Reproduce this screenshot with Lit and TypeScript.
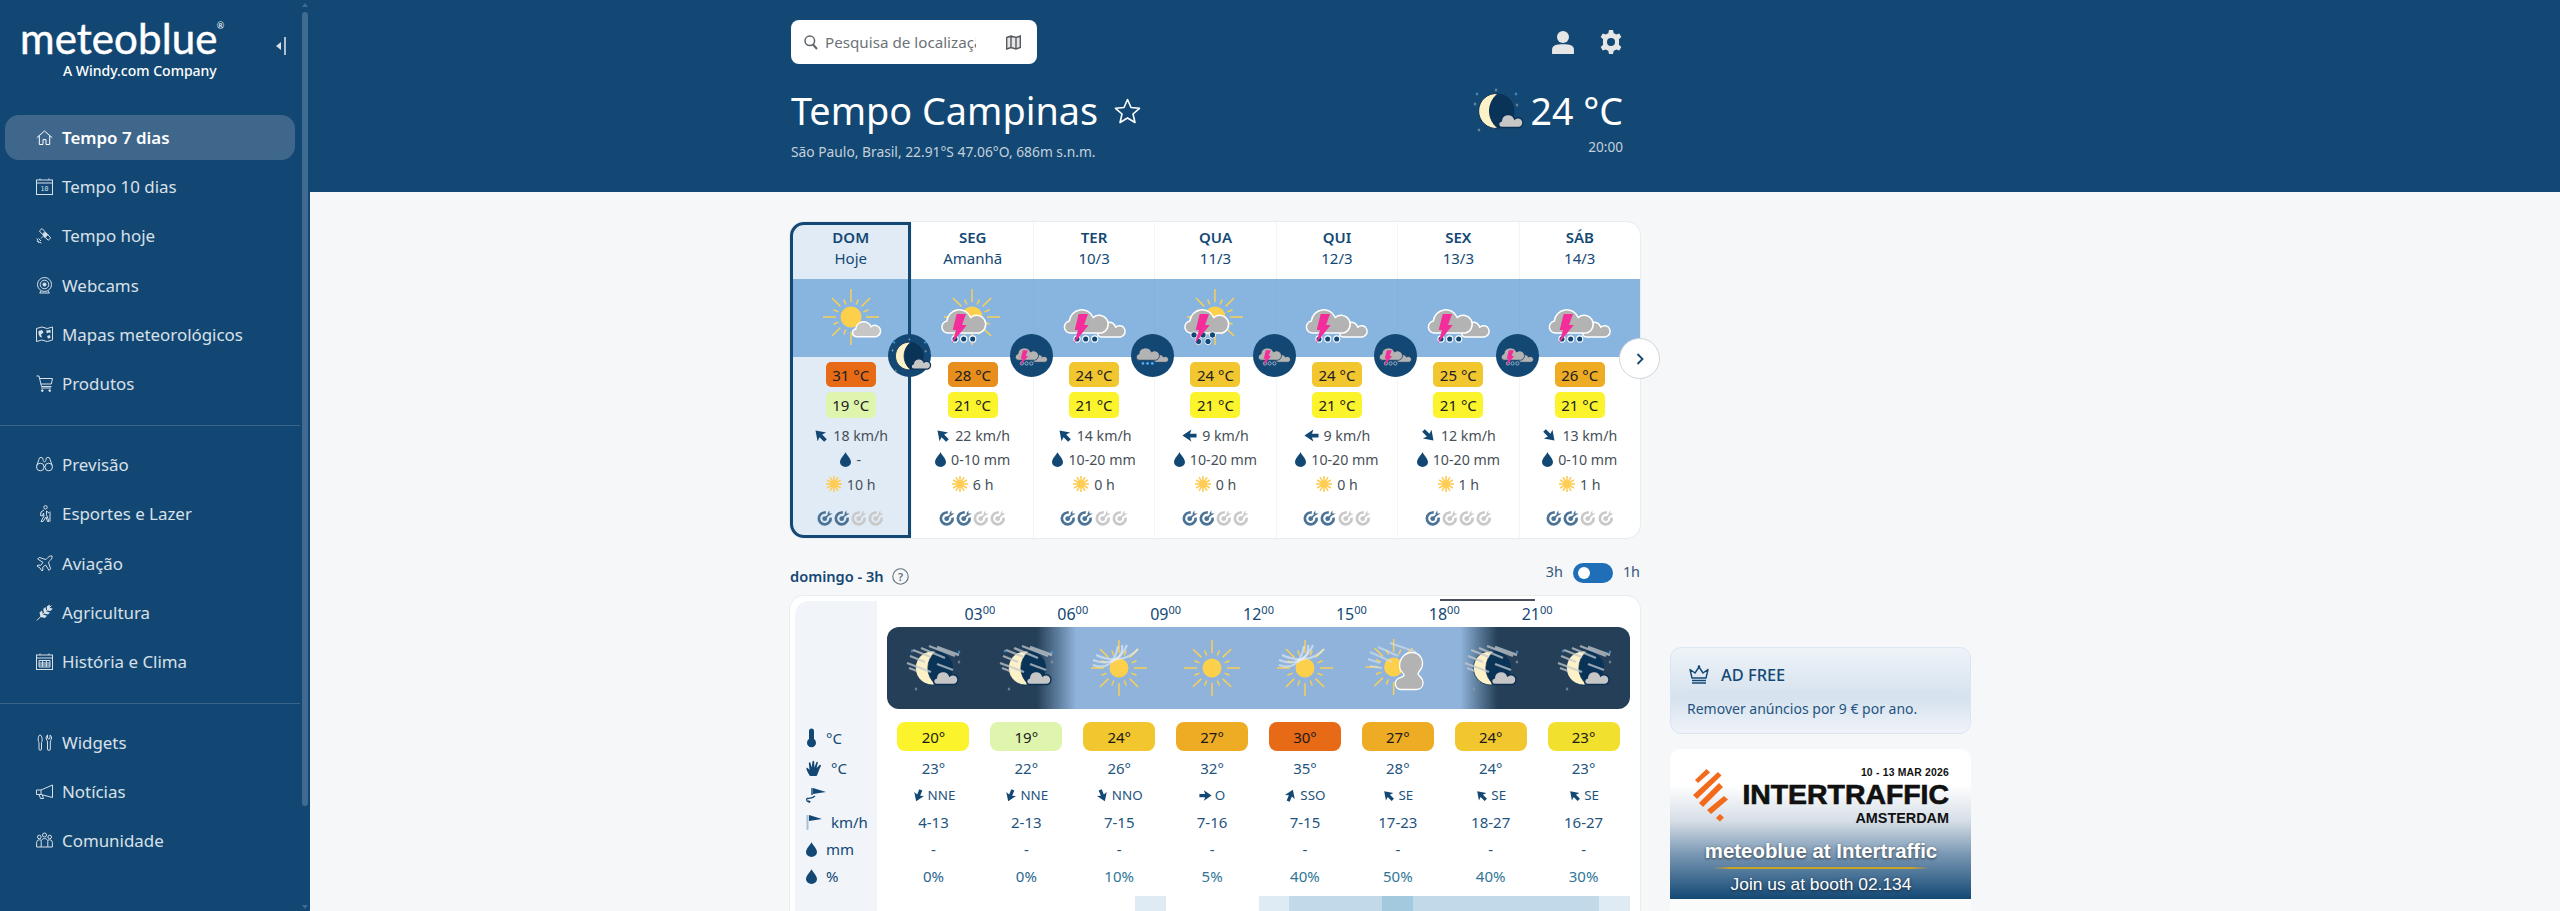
// app.ts
import { LitElement, html, css, svg } from "lit";
import { customElement } from "lit/decorators.js";

const NAVY = "#134874";

// ---------- weather pieces, drawn on a 64x64 box ----------
const CLOUD = "M7 26a6 6 0 0 1-1.2-11.9A12.5 12.5 0 0 1 29.8 10.5A9 9 0 1 1 38 26Z";

const cloud = (x: number, y: number, s: number, fill = "#b3b3b3", edge = "#fff") => svg`
  <path transform="translate(${x} ${y}) scale(${s})" d=${CLOUD} fill=${fill} stroke=${edge} stroke-width=${1.5 / s}></path>`;

const sun = (r = 10.5, color = "#f9cf55") => {
  const rays = [];
  for (let i = 0; i < 16; i++) {
    const a = (i * Math.PI) / 8;
    const long = i % 2 === 0;
    const r1 = long ? 15 : 13.5;
    const r2 = long ? (i % 4 === 0 ? 28 : 27) : 19;
    rays.push(svg`<line x1=${32 + Math.cos(a) * r1} y1=${32 + Math.sin(a) * r1} x2=${32 + Math.cos(a) * r2} y2=${32 + Math.sin(a) * r2} stroke=${color} stroke-width="1.5"></line>`);
  }
  return svg`${rays}<circle cx="32" cy="32" r=${r} fill="#fdd04c"></circle>`;
};

const bolt = svg`<path d="M16.7 29H26L22 40H26.7L12 58.3L16 45H12.7Z" fill="#f52d9b"></path>`;

const dots = (fill: string, edge: string) => svg`
  ${[15, 23.7, 32.7].map((x) => svg`<circle cx=${x} cy="54" r="3.1" fill=${fill} stroke=${edge} stroke-width="1.1"></circle>`)}`;

const bigDrops = svg`
  ${[[11, 50], [20, 50], [29.5, 50], [15.5, 56.5], [25, 56.5]].map(([x, y]) => svg`<circle cx=${x} cy=${y} r="3.2" fill=${NAVY} stroke="#fff" stroke-width=".9"></circle>`)}`;

const dayIcons: Record<string, unknown> = {
  sun: svg`${sun()}${cloud(33, 35, 0.64, "#c6c6c6")}`,
  stormSun: svg`${sun()}${cloud(1, 22, 1)}${dots(NAVY, "#fff")}${bolt}`,
  stormSunHeavy: svg`${sun()}${cloud(1, 22, 1)}${bigDrops}${bolt}`,
  storm: svg`${cloud(35, 35.5, 0.63)}${cloud(1.5, 22, 1)}${dots(NAVY, "#fff")}${bolt}`,
  stormLight: svg`${cloud(35, 35.5, 0.63, "#b3b3b3", "#123f68")}${cloud(1.5, 22, 1, "#b3b3b3", "#123f68")}${dots(NAVY, "#e6edf3")}${bolt}`,
  rain: svg`${cloud(35, 35.5, 0.63, "#b3b3b3", "#123f68")}${cloud(1.5, 22, 1, "#b3b3b3", "#123f68")}
    ${[15, 23.7, 32.7].map((x) => svg`<circle cx=${x} cy="54" r="2.6" fill="#5aa9ee"></circle>`)}`,
};

const star = (x: number, y: number, c = "#8a99a8", s = 1.8) => svg`
  <path d="M${x} ${y - s * 1.3}L${x + s * 0.3} ${y - s * 0.3}L${x + s} ${y}L${x + s * 0.3} ${y + s * 0.3}L${x} ${y + s * 1.3}L${x - s * 0.3} ${y + s * 0.3}L${x - s} ${y}L${x - s * 0.3} ${y - s * 0.3}Z" fill=${c}></path>`;

// moon with its stars, on a 48x48 box
const moonPlain = svg`
  ${star(4, 7, "#4f9fe6")}${star(23, 3)}${star(43, 7, "#4f9fe6")}${star(2, 17)}${star(44, 18)}${star(6, 43)}
  <circle cx="24" cy="24" r="17" fill="#0a3358" stroke="#0c3156" stroke-width="1"></circle>
  <path d="M25 6.6A17.5 17.5 0 1 0 25 41.4A22 22 0 0 1 25 6.6Z" fill="#fdf1c7" stroke="#0c3156" stroke-width="1"></path>
  ${cloud(25, 26, 0.56, "#c6c6c6", "#0c3156")}`;

// hourly night icon: moon behind a veil of thin cloud
const haze = svg`
  ${[[12, 14, 30, 21], [20, 12, 44, 22], [28, 10, 54, 20], [9, 20, 24, 26], [36, 11, 58, 19], [6, 27, 30, 36], [36, 28, 52, 34], [8, 32, 16, 35]].map(
    ([a, b, c, d]) => svg`<line x1=${a} y1=${b} x2=${c} y2=${d} stroke="#c3c9cf" stroke-opacity=".75" stroke-width="2.4"></line>`)}`;

const moonHaze = svg`
  ${star(11, 15, "#4f9fe6")}${star(58, 16, "#4f9fe6")}${star(58, 26)}${star(15, 53)}
  <circle cx="35" cy="32" r="17" fill="#0a3358"></circle>
  <path d="M35 15.4A17 17 0 1 0 35 48.6A21 21 0 0 1 35 15.4Z" fill="#fdf1c7" stroke="#0c3156" stroke-width=".8"></path>
  ${cloud(32, 34, 0.56, "#c6c6c6", "#0c3156")}${haze}`;

const sunHaze = svg`
  ${sun(9.5)}
  <g fill="none" stroke="#e6edf5" stroke-opacity=".62" stroke-width="2.2">
    <path d="M6 29C18 34 28 28 31 10"></path><path d="M6 24C20 30 34 24 40 9"></path>
    <path d="M9 19C22 25 40 26 51 13"></path><path d="M24 26C34 22 36 16 35 9"></path>
  </g>`;

const sunCloud = svg`
  <g transform="translate(-4.4 -1)">${sun(9.5)}</g>
  ${[[4, 16, 26, 26], [12, 11, 32, 20], [24, 7, 50, 16], [2, 23, 14, 27], [4, 30, 16, 32]].map(
    ([a, b, c, d]) => svg`<line x1=${a} y1=${b} x2=${c} y2=${d} stroke="#d9e2ec" stroke-opacity=".6" stroke-width="2.2"></line>`)}
  <path d="M35 53.5C29 53.5 27 45 33 42C35 41 38 41 38 39C38 37 35 36 34 33C32 24 38 16.5 46 16.5C54 16.5 58 24 56 31C55 34 52 36 52 38C52 40 57 41 57 47C57 51 54 53.5 50 53.5Z" fill="#b3b3b3" stroke="#fff" stroke-width="1.3"></path>`;

const hourIcons: Record<string, unknown> = { moon: moonHaze, haze: sunHaze, clear: sun(9.5), cloud: sunCloud };

// ---------- small glyphs ----------
const windArrow = (deg: number, size = 15) => html`
  <svg class="glyph" width=${size} height=${size} viewBox="0 0 16 16" style="transform: rotate(${deg - 90}deg)">
    <path d="M.5 8L10 1.5L8.5 6H15.5V10H8.5L10 14.5Z" fill=${NAVY}></path>
  </svg>`;

const drop = (w = 11, h = 15, color = NAVY) => html`
  <svg class="glyph" width=${w} height=${h} viewBox="0 0 11 15"><path d="M5.5 0C4.5 3 0 6.5 0 10a5.5 5 0 0 0 11 0C11 6.5 6.5 3 5.5 0Z" fill=${color}></path></svg>`;

const sunGlyph = html`
  <svg class="glyph" width="16" height="16" viewBox="0 0 16 16">
    ${Array.from({ length: 12 }, (_, i) => svg`<line x1="8" y1="0" x2="8" y2="5" transform="rotate(${i * 30} 8 8)" stroke="#ffcc55" stroke-width="1.6"></line>`)}
    <circle cx="8" cy="8" r="3.7" fill="#ffcc55"></circle>
  </svg>`;

const target = (on: boolean) => {
  const c = on ? "#4b7396" : "#c9c9c9";
  return html`
    <svg class="glyph" width="16" height="16" viewBox="0 0 16 16">
      <path d="M8.8 2.6A5.9 5.9 0 1 0 13.6 7.6" fill="none" stroke=${c} stroke-width="2.7"></path>
      <circle cx="7.7" cy="8.7" r="2.4" fill=${c}></circle>
      <path d="M8 8.4L12 4.4" fill="none" stroke=${c} stroke-width="1.6"></path>
      <path d="M10.4 3.6L12.4 .3V3.6H15.7L12.4 5.6Z" fill=${c}></path>
    </svg>`;
};

// ---------- sidebar icons, thin outline on 17x17 ----------
const navIcons: Record<string, unknown> = {
  home: svg`<path d="M.8 8.7L8.5 2L16.2 8.7M3.3 7V15.5H7V10.6H10V15.5H13.7V7"></path>`,
  cal10: svg`<rect x=".5" y="2" width="16" height="14.5"></rect><path d="M.5 5H16.5M4 .5V2M13 .5V2"></path>
    <text x="8.5" y="13.4" text-anchor="middle" font-size="6.6" font-family="DejaVu Sans Mono" fill="currentColor" stroke="none">10</text>`,
  satellite: svg`<path d="M6 1.5L3.4 4.1L6.4 7.2L9 4.6ZM11.6 7.6L9 10.2L12.2 13.2L14.8 10.8Z"></path><path d="M6.6 8L9.4 5.2L11.8 7.6L9 10.4Z" fill="currentColor"></path>
    <path d="M1 11.5C1.5 14 3 15.5 5.5 16M1 13.8L3.2 16M2.5 11.5L5 14M5 11.4L7 9.4"></path>`,
  webcam: svg`<circle cx="8.5" cy="7.5" r="7"></circle><circle cx="8.5" cy="7.5" r="4.3"></circle><circle cx="8.5" cy="7.5" r="1.6" fill="currentColor"></circle><path d="M3.5 16H13.5M5 14L3.8 16M12 14L13.2 16"></path>`,
  map: svg`<path d="M.5 2.5L5.8 1L11.2 2.5L16.5 1V14L11.2 15.5L5.8 14L.5 15.5Z"></path><path d="M2.5 5L6 4L7.5 6.5L5 8.5L6 11.5L4 11L2.5 8ZM10 4.5L14.5 4V7L12.5 6.5L11 7.5ZM11 10L14 9L14.5 12L12 12.5Z" fill="currentColor" stroke="none"></path>`,
  cart: svg`<path d="M.5 1H3L5.5 11.5H15.5M3.6 3.5H16.5L15.3 9H4.8M5 13H15"></path><circle cx="6.3" cy="15.6" r=".9" fill="currentColor"></circle><circle cx="13.7" cy="15.6" r=".9" fill="currentColor"></circle>`,
  binoculars: svg`<circle cx="4.3" cy="11" r="3.8"></circle><circle cx="12.7" cy="11" r="3.8"></circle><path d="M.8 9.5L3 3.2A2 2 0 0 1 7 3.5C7.2 5 8 6 8.5 6C9 6 9.8 5 10 3.5A2 2 0 0 1 14 3.2L16.2 9.5M8.1 10.5H8.9"></path>`,
  hiker: svg`<circle cx="9.5" cy="2.3" r="1.7"></circle><path d="M8 5L5 7L4.5 10.5L6.5 11L7.5 8L8 11L5 16.5H7L10 12L11.5 16.5H13L10.5 9.5L10.5 6L13 8M14 6.5V16.5"></path>`,
  plane: svg`<path d="M16 1C14.5 .6 13 1.4 12 2.4L9.8 4.6L3.2 2.4L1.6 4L7 7.4L4.6 10.4L2 10L1 11L4 13L6 16L7 15L6.6 12.4L9.6 10L13 15.4L14.6 13.8L12.4 7.2L14.6 5C15.6 4 16.4 2.5 16 1Z"></path>`,
  wheat: svg`<path d="M.8 16.5L15.5 1.5"></path><path d="M4.5 13L3.5 8.5L6 6.5L7 10.5ZM8 9.5L7.2 5L9.5 3L10.5 7.5ZM11 6.5L10.8 2.5L13.5 .5L14 4ZM4.5 13L9 14L11 11.8L7 10.5ZM8 9.5L12 10.5L14 8.5L10.5 7.5ZM11 6.5L14.5 7L16.8 4.5L14 4Z" fill="currentColor" stroke="none"></path>`,
  calGrid: svg`<rect x=".5" y="2" width="16" height="14.5"></rect><path d="M.5 5H16.5M4 .5V2M13 .5V2M3 7.5H14V14H3ZM3 10H14M3 12H14M6.6 7.5V14M10.3 7.5V14"></path>`,
  widgets: svg`<path d="M4 1C2.5 1 2.2 4 2.2 6C2.2 7.5 3 8 3 9V15A1.2 1.2 0 0 0 5.5 15V9C5.5 8 6.2 7.5 6.2 6C6.2 4 5.5 1 4 1Z"></path>
    <path d="M11.5 1V4.2L12.8 5L14 4.2V1C15.4 1.8 15.8 3.5 15.4 5C15 6.4 14.3 6.6 14.3 8V15A1.3 1.3 0 0 1 11.5 15V8C11.5 6.6 10.7 6.4 10.3 5C9.9 3.5 10.2 1.8 11.5 1Z"></path>`,
  megaphone: svg`<path d="M.5 7H5L16.5 2V14.5L5 11.5H.5ZM5 7V11.5M3 11.5L4.5 15.5H7.5L6.3 12"></path>`,
  people: svg`<circle cx="8.5" cy="3" r="2"></circle><circle cx="3.3" cy="5" r="1.8"></circle><circle cx="13.7" cy="5" r="1.8"></circle>
    <path d="M5.2 15V9.5C5.2 7.8 6.8 6.5 8.5 6.5C10.2 6.5 11.8 7.8 11.8 9.5V15ZM5 8.2C3 7 .6 8.5 .6 10.5V15H5.2M12 8.2C14 7 16.4 8.5 16.4 10.5V15H11.8"></path>`,
};

const navGroups = [
  [
    ["home", "Tempo 7 dias"],
    ["cal10", "Tempo 10 dias"],
    ["satellite", "Tempo hoje"],
    ["webcam", "Webcams"],
    ["map", "Mapas meteorológicos"],
    ["cart", "Produtos"],
  ],
  [
    ["binoculars", "Previsão"],
    ["hiker", "Esportes e Lazer"],
    ["plane", "Aviação"],
    ["wheat", "Agricultura"],
    ["calGrid", "História e Clima"],
  ],
  [
    ["widgets", "Widgets"],
    ["megaphone", "Notícias"],
    ["people", "Comunidade"],
  ],
];

// ---------- data ----------
const tempColors: Record<number, string> = {
  19: "#dff5ae",
  20: "#fbf42c",
  21: "#fbf42c",
  23: "#f2e02f",
  24: "#f2c62f",
  25: "#f2c62f",
  26: "#eeab24",
  27: "#eeab24",
  28: "#e78e1c",
  30: "#e76a17",
  31: "#e76a17",
};

interface Day {
  name: string;
  date: string;
  icon: string;
  night?: string;
  max: number;
  min: number;
  dir: number;
  wind: string;
  rain: string;
  sun: string;
  pred: number;
}

const days: Day[] = [
  { name: "DOM", date: "Hoje", icon: "sun", night: "moon", max: 31, min: 19, dir: 135, wind: "18 km/h", rain: "-", sun: "10 h", pred: 2 },
  { name: "SEG", date: "Amanhã", icon: "stormSun", night: "stormLight", max: 28, min: 21, dir: 135, wind: "22 km/h", rain: "0-10 mm", sun: "6 h", pred: 2 },
  { name: "TER", date: "10/3", icon: "storm", night: "rain", max: 24, min: 21, dir: 135, wind: "14 km/h", rain: "10-20 mm", sun: "0 h", pred: 2 },
  { name: "QUA", date: "11/3", icon: "stormSunHeavy", night: "stormLight", max: 24, min: 21, dir: 90, wind: "9 km/h", rain: "10-20 mm", sun: "0 h", pred: 2 },
  { name: "QUI", date: "12/3", icon: "storm", night: "stormLight", max: 24, min: 21, dir: 90, wind: "9 km/h", rain: "10-20 mm", sun: "0 h", pred: 2 },
  { name: "SEX", date: "13/3", icon: "storm", night: "stormLight", max: 25, min: 21, dir: 315, wind: "12 km/h", rain: "10-20 mm", sun: "1 h", pred: 1 },
  { name: "SÁB", date: "14/3", icon: "storm", max: 26, min: 21, dir: 315, wind: "13 km/h", rain: "0-10 mm", sun: "1 h", pred: 2 },
];

const hours = [
  { time: "03", icon: "moon", t: 20, feel: 23, dir: 22.5, dirName: "NNE", wind: "4-13", pct: 0 },
  { time: "06", icon: "moon", t: 19, feel: 22, dir: 22.5, dirName: "NNE", wind: "2-13", pct: 0 },
  { time: "09", icon: "haze", t: 24, feel: 26, dir: 337.5, dirName: "NNO", wind: "7-15", pct: 10 },
  { time: "12", icon: "clear", t: 27, feel: 32, dir: 270, dirName: "O", wind: "7-16", pct: 5 },
  { time: "15", icon: "haze", t: 30, feel: 35, dir: 202.5, dirName: "SSO", wind: "7-15", pct: 40 },
  { time: "18", icon: "cloud", t: 27, feel: 28, dir: 135, dirName: "SE", wind: "17-23", pct: 50 },
  { time: "21", icon: "moon", t: 24, feel: 24, dir: 135, dirName: "SE", wind: "18-27", pct: 40 },
  { time: "", icon: "moon", t: 23, feel: 23, dir: 135, dirName: "SE", wind: "16-27", pct: 30 },
];

// rain probability strip under the hourly table
const strip = ["", "", "", "", "", "", "", "", "a", "", "", "", "a", "b", "b", "b", "c", "b", "b", "b", "b", "b", "b", "a"];
const stripColors: Record<string, string> = { "": "transparent", a: "#deeaf4", b: "#c2d9ea", c: "#a3c9de" };

// ---------- element ----------
@customElement("app-root")
export class AppRoot extends LitElement {
  static styles = css`
    :host {
      display: flex;
      width: 100%;
      height: 100vh;
      overflow: hidden;
      background: #f6f7f8;
      color: #134874;
      font-family: "Noto Sans", "Open Sans", sans-serif;
    }
    svg {
      overflow: visible;
    }
    .glyph {
      flex: none;
      display: block;
    }

    /* sidebar */
    .sidebar {
      position: relative;
      flex: none;
      width: 310px;
      height: 100%;
      overflow: hidden;
      background: #134773;
      color: #d8e0e8;
    }
    .brand {
      display: flex;
      justify-content: space-between;
      align-items: flex-start;
      height: 115px;
      padding: 16px 24px 0 20px;
      box-sizing: border-box;
    }
    .logo {
      display: flex;
      flex-direction: column;
      width: 200px;
      color: #fff;
    }
    .word {
      position: relative;
      align-self: flex-start;
      font-family: "Lato", "Noto Sans", sans-serif;
      font-size: 42px;
      line-height: 44px;
      letter-spacing: 0.1px;
      white-space: nowrap;
      -webkit-text-stroke: 0.5px #fff;
    }
    .word sup {
      position: absolute;
      top: 5px;
      right: -7px;
      font-size: 9px;
      line-height: 9px;
      -webkit-text-stroke: 0;
    }
    .claim {
      margin: 1px 0 0 43px;
      font-size: 14px;
      line-height: 20px;
      font-weight: 500;
      white-space: nowrap;
    }
    .collapse {
      margin-top: 21px;
    }
    .group {
      padding: 0 0 15px 5px;
      margin: 0 10px 16px 0;
      border-bottom: 1px solid #3a6488;
    }
    .group.last {
      border-bottom: 0;
      margin-bottom: 0;
    }
    .item {
      display: flex;
      align-items: center;
      gap: 9px;
      width: 290px;
      height: 45px;
      margin-bottom: 4.2px;
      padding-left: 31px;
      box-sizing: border-box;
      border-radius: 14px;
      font-size: 16.9px;
      white-space: nowrap;
    }
    .item.active {
      background: #3f678c;
      color: #fff;
      font-weight: 600;
    }
    .item svg {
      flex: none;
      fill: none;
      stroke: currentColor;
      stroke-width: 1;
    }
    .more {
      padding-left: 38px;
      margin-top: 28px;
      font-size: 16.9px;
    }
    .scroll {
      position: absolute;
      top: 0;
      right: 2px;
      bottom: 0;
      width: 6px;
    }
    .thumb {
      position: absolute;
      top: 12px;
      left: 0;
      width: 6px;
      height: 794px;
      border-radius: 3px;
      background: #406b90;
    }
    .arrow {
      position: absolute;
      left: 0;
      border-left: 3px solid transparent;
      border-right: 3px solid transparent;
    }
    .arrow.up {
      top: 3px;
      border-bottom: 4px solid #406b90;
    }
    .arrow.down {
      bottom: 2px;
      border-top: 4px solid #406b90;
    }

    /* main area */
    .main {
      flex: 1;
      min-width: 0;
    }
    .head {
      height: 192px;
      padding: 20px 0 0 481px;
      box-sizing: border-box;
      background: #134874;
      color: #fff;
    }
    .head-in {
      width: 832px;
    }
    .top {
      display: flex;
      justify-content: space-between;
      align-items: center;
      height: 44px;
    }
    .search {
      display: flex;
      align-items: center;
      width: 246px;
      height: 44px;
      padding: 0 16px 0 13px;
      box-sizing: border-box;
      border-radius: 8px;
      background: #fff;
    }
    .search input {
      width: 151px;
      margin: 0 30px 0 7px;
      padding: 0;
      border: 0;
      outline: 0;
      background: none;
      font: 15.2px "Noto Sans", sans-serif;
    }
    .search input::placeholder {
      color: #6d7277;
      opacity: 1;
    }
    .tools {
      display: flex;
      align-items: center;
      gap: 25px;
    }
    .title-row {
      display: flex;
      justify-content: space-between;
      margin-top: 20px;
    }
    .title {
      display: flex;
      align-items: center;
      gap: 16px;
      font-size: 37.8px;
      line-height: 54px;
    }
    .title h1 {
      margin: 0;
      font: inherit;
      white-space: nowrap;
    }
    .sub {
      margin-top: 5px;
      font-size: 13.8px;
      line-height: 18px;
      color: #c3d0dc;
    }
    .now {
      display: flex;
      flex-direction: column;
      align-items: flex-end;
    }
    .now-line {
      display: flex;
      align-items: center;
      gap: 10px;
      font-size: 37.5px;
      line-height: 54px;
    }
    .now-time {
      font-size: 13.6px;
      line-height: 18px;
      color: #c3d0dc;
    }

    /* content columns */
    .content {
      display: flex;
      gap: 30px;
      padding: 30px 0 0 480px;
    }
    .col {
      flex: none;
      width: 850px;
    }
    .side {
      flex: none;
      width: 301px;
      padding-top: 425px;
    }

    /* 7 day card */
    .week {
      position: relative;
      display: grid;
      grid-template-columns: repeat(7, 1fr);
      height: 316px;
      border-radius: 14px;
      background: #fff;
      box-shadow: 0 0 0 1px #e9ecef;
    }
    .day {
      position: relative;
      display: flex;
      flex-direction: column;
      align-items: center;
      border-left: 1px solid #f2f4f5;
    }
    .day:first-child {
      border-left: 0;
      border-radius: 14px 0 0 14px;
      background: #e1ebf6;
    }
    .day:first-child::after {
      content: "";
      position: absolute;
      inset: 0;
      z-index: 2;
      border: 3px solid #134874;
      border-radius: 14px 0 0 14px;
      pointer-events: none;
    }
    .day-head {
      height: 57px;
      padding-top: 5px;
      box-sizing: border-box;
      text-align: center;
      font-size: 15px;
      line-height: 21px;
    }
    .day-head b {
      display: block;
      font-weight: 600;
    }
    .day-band {
      position: relative;
      display: flex;
      justify-content: center;
      align-self: stretch;
      height: 78px;
      margin-left: -1px;
      padding-top: 6px;
      box-sizing: border-box;
      background: #87b5e0;
      box-shadow: inset 1px 0 0 rgba(0, 40, 80, 0.025);
    }
    .day:first-child .day-band {
      margin-left: 0;
    }
    .night {
      position: absolute;
      z-index: 3;
      top: 55px;
      right: -20px;
      display: flex;
      align-items: center;
      justify-content: center;
      width: 43px;
      height: 43px;
      border-radius: 50%;
      background: #134874;
    }
    .temp {
      display: flex;
      align-items: center;
      justify-content: center;
      width: 50px;
      height: 25px;
      margin-top: 5px;
      border-radius: 5px;
      color: #202020;
      font-size: 15px;
    }
    .temp + .temp {
      height: 26px;
    }
    .stat {
      display: flex;
      align-items: center;
      gap: 5px;
      height: 24.5px;
      color: #474f57;
      font-size: 14.2px;
      white-space: nowrap;
    }
    .stat.first {
      margin-top: 5px;
    }
    .pred {
      display: flex;
      gap: 1.2px;
      margin-top: 13px;
    }
    .next {
      position: absolute;
      z-index: 4;
      top: 116px;
      right: -20px;
      display: flex;
      align-items: center;
      justify-content: center;
      width: 41px;
      height: 41px;
      box-sizing: border-box;
      border: 1px solid #cfd5da;
      border-radius: 50%;
      background: #fff;
    }

    /* hourly */
    .hour-head {
      display: flex;
      justify-content: space-between;
      align-items: flex-start;
      height: 33px;
      margin-top: 25px;
    }
    .hour-title {
      display: flex;
      align-items: center;
      gap: 8px;
      height: 26px;
      font-size: 14.6px;
      font-weight: 600;
    }
    .switch {
      display: flex;
      align-items: center;
      gap: 10px;
      height: 20px;
      color: #35587a;
      font-size: 14.4px;
    }
    .switch span {
      margin-top: -4px;
    }
    .toggle {
      display: flex;
      align-items: center;
      width: 40px;
      height: 20px;
      padding-left: 5px;
      box-sizing: border-box;
      border-radius: 10px;
      background: #1e6fb8;
    }
    .toggle i {
      width: 12px;
      height: 12px;
      border-radius: 50%;
      background: #fff;
    }
    .hourly {
      position: relative;
      display: flex;
      gap: 10px;
      height: 400px;
      padding: 5px 10px 0 5px;
      box-sizing: border-box;
      border-radius: 14px 14px 0 0;
      background: #fff;
      box-shadow: 0 0 0 1px #e9ecef;
    }
    .marker {
      position: absolute;
      top: 3px;
      left: 650px;
      width: 95px;
      height: 2px;
      background: #4a4f5c;
    }
    .labels {
      flex: none;
      width: 82px;
      padding: 121px 0 0 11px;
      box-sizing: border-box;
      border-radius: 14px 0 0 0;
      background: #f1f5f9;
      font-size: 15px;
    }
    .labels > div {
      display: flex;
      align-items: center;
      gap: 9px;
    }
    .grid {
      flex: 1;
      min-width: 0;
    }
    .times,
    .row {
      display: grid;
      grid-template-columns: repeat(8, 1fr);
      align-items: center;
      justify-items: center;
    }
    .times {
      height: 26px;
      font-size: 16px;
      line-height: 26px;
    }
    .times span {
      justify-self: end;
      transform: translateX(50%);
      white-space: nowrap;
    }
    .times sup {
      font-size: 11px;
      line-height: 0;
      vertical-align: 6px;
    }
    .band {
      display: grid;
      grid-template-columns: repeat(8, 1fr);
      justify-items: center;
      align-items: center;
      height: 82px;
      border-radius: 12px;
      background: linear-gradient(90deg, #243f57 20.1%, #8fb3da 25.5%, #8fb3da 77.2%, #243f57 82.2%);
    }
    .pill {
      display: flex;
      align-items: center;
      justify-content: center;
      width: 72px;
      height: 29px;
      border-radius: 8px;
      color: #1a1a1a;
      font-size: 15px;
    }
    .r0 {
      height: 45px;
      align-items: start;
    }
    .r0 .pill {
      margin-top: 13px;
    }
    .h1 {
      height: 28px;
    }
    .h2 {
      height: 26px;
    }
    .row {
      font-size: 15px;
      color: #1f5480;
    }
    .row.dirs {
      font-size: 13.4px;
    }
    .dirs div {
      display: flex;
      align-items: center;
      gap: 3px;
    }
    .labels .h0 {
      height: 32px;
    }
    .strip {
      display: grid;
      grid-template-columns: repeat(24, 1fr);
      height: 30px;
      margin-top: 6px;
    }

    /* right column */
    .adfree {
      height: 87px;
      padding: 0 16px;
      box-sizing: border-box;
      border: 1px solid #dbe6f2;
      border-radius: 11px;
      background: linear-gradient(180deg, #eef3f8 0%, #d6e2ee 58%, #eff3f9 100%);
      font-size: 14px;
      color: #1f5480;
    }
    .adfree-head {
      display: flex;
      align-items: center;
      gap: 12px;
      height: 44px;
      margin-bottom: 7px;
      padding: 10px 0 0 2px;
      box-sizing: border-box;
      border-bottom: 1px solid #d2e1f0;
      font-size: 16.4px;
      font-weight: 500;
      color: #134874;
    }
    .ad {
      height: 170px;
      margin-top: 15px;
      border-radius: 11px 11px 0 0;
      overflow: hidden;
      background: #fafbfb;
    }
    .ad-in {
      display: flex;
      flex-direction: column;
      height: 150px;
      box-sizing: border-box;
      padding: 17px 22px 0 23px;
      background: linear-gradient(180deg, #fff 24%, #d6dee6 48%, #7a98b4 70%, #134874 100%);
      font-family: "Liberation Sans", Arial, sans-serif;
      font-weight: 700;
    }
    .brand-ad {
      display: flex;
      align-items: flex-start;
      justify-content: space-between;
      height: 71px;
      color: #111;
      text-align: right;
    }
    .ad-date {
      font-size: 10.4px;
      line-height: 14px;
      letter-spacing: 0.2px;
    }
    .ad-name {
      font-size: 28.4px;
      line-height: 28px;
      white-space: nowrap;
      -webkit-text-stroke: 0.7px #111;
    }
    .ad-city {
      font-size: 14.4px;
      line-height: 20px;
    }
    .ad-line1 {
      margin-top: 1px;
      text-align: center;
      color: #fff;
      font-size: 20.4px;
      line-height: 26px;
      text-shadow: 0 1px 3px rgba(0, 0, 0, 0.6);
    }
    .ad-rule {
      height: 2px;
      margin: 3px 20px 0;
      background: linear-gradient(90deg, transparent, #c9a227 8%, #c9a227 92%, transparent);
    }
    .ad-line2 {
      margin-top: 3px;
      text-align: center;
      color: #fff;
      font-size: 17.4px;
      font-weight: 400;
      line-height: 24px;
      text-shadow: 0 1px 3px rgba(0, 0, 0, 0.6);
    }
  `;

  private renderNav() {
    return navGroups.map(
      (group, g) => html`
        <div class="group ${g === 2 ? "last" : ""}">
          ${group.map(
            ([icon, label], i) => html`
              <div class="item ${g === 0 && i === 0 ? "active" : ""}">
                <svg width="17" height="17" viewBox="0 0 17 17">${navIcons[icon]}</svg>
                <span>${label}</span>
              </div>
            `
          )}
        </div>
      `
    );
  }

  private renderDay(d: Day) {
    return html`
      <div class="day">
        <div class="day-head"><b>${d.name}</b>${d.date}</div>
        <div class="day-band">
          <svg width="64" height="64" viewBox="0 0 64 64">${dayIcons[d.icon]}</svg>
          ${d.night
            ? html`<div class="night">
                ${d.night === "moon"
                  ? html`<svg width="38" height="38" viewBox="0 0 48 48">${moonPlain}</svg>`
                  : html`<svg width="35" height="24" viewBox="0 18 66 44">${dayIcons[d.night]}</svg>`}
              </div>`
            : ""}
        </div>
        <div class="temp" style="background:${tempColors[d.max]}">${d.max} °C</div>
        <div class="temp" style="background:${tempColors[d.min]}">${d.min} °C</div>
        <div class="stat first">${windArrow(d.dir)}<span>${d.wind}</span></div>
        <div class="stat">${drop()}<span>${d.rain}</span></div>
        <div class="stat">${sunGlyph}<span>${d.sun}</span></div>
        <div class="pred">${[0, 1, 2, 3].map((i) => target(i < d.pred))}</div>
      </div>
    `;
  }

  private renderHourly() {
    return html`
      <div class="hourly">
        <div class="marker"></div>
        <div class="labels">
          <div class="h0">
            <svg class="glyph" width="11" height="20" viewBox="0 0 11 20"><path d="M3 3a2.5 2.5 0 0 1 5 0V11a4.5 4.5 0 1 1-5 0Z" fill=${NAVY}></path></svg>
            <span>°C</span>
          </div>
          <div class="h1">
            <svg class="glyph" width="16" height="17" viewBox="0 0 16 17"><path d="M4 16C2 13 0 9 .5 8C1.5 7 3 9.5 3.5 10L2.8 3C3 2 4.3 2 4.5 3L5.6 7.5L6.5 1.5C6.8.6 8 .6 8.2 1.5L8.4 7.5L10.4 2.2C10.8 1.4 12 1.8 11.8 2.8L10.6 8L13.6 5C14.5 4.5 15.4 5.2 14.8 6.2C13 9 12.5 13 10.5 16Z" fill=${NAVY}></path></svg>
            <span>°C</span>
          </div>
          <div class="h2">
            <svg class="glyph" width="20" height="16" viewBox="0 0 20 16"><path d="M6 1V8" stroke=${NAVY} stroke-width="1.4"></path><path d="M7 1L20 5L7 7Z" fill=${NAVY}></path><path d="M9 9C6 12 3 11 1 11.5C0 13 1 15 4 15" fill="none" stroke=${NAVY} stroke-width="1.3"></path><path d="M2 13L5 14.5L3 16Z" fill=${NAVY}></path></svg>
          </div>
          <div class="h1">
            <svg class="glyph" width="16" height="16" viewBox="0 0 16 16"><path d="M1.5 1V16" stroke="#a9bfd4" stroke-width="2"></path><path d="M3 1L16 5L3 7Z" fill=${NAVY}></path></svg>
            <span>km/h</span>
          </div>
          <div class="h2">${drop()}<span>mm</span></div>
          <div class="h1">${drop()}<span>%</span></div>
        </div>
        <div class="grid">
          <div class="times">
            ${hours.map((h) => html`<span>${h.time ? html`${h.time}<sup>00</sup>` : ""}</span>`)}
          </div>
          <div class="band">
            ${hours.map((h) => html`<svg width="64" height="64" viewBox="0 0 64 64">${hourIcons[h.icon]}</svg>`)}
          </div>
          <div class="row r0">
            ${hours.map((h) => html`<div class="pill" style="background:${tempColors[h.t]}">${h.t}°</div>`)}
          </div>
          <div class="row h1">${hours.map((h) => html`<div>${h.feel}°</div>`)}</div>
          <div class="row h2 dirs">
            ${hours.map((h) => html`<div>${windArrow(h.dir, 13)}<span>${h.dirName}</span></div>`)}
          </div>
          <div class="row h1">${hours.map((h) => html`<div>${h.wind}</div>`)}</div>
          <div class="row h2">${hours.map(() => html`<div>-</div>`)}</div>
          <div class="row h1">
            ${hours.map((h) => html`<div style="color:${h.pct > 0 ? "#2f7696" : "#2b6590"}">${h.pct}%</div>`)}
          </div>
          <div class="strip">${strip.map((c) => html`<div style="background:${stripColors[c]}"></div>`)}</div>
        </div>
      </div>
    `;
  }

  render() {
    return html`
      <aside class="sidebar">
        <div class="brand">
          <div class="logo">
            <div class="word">meteoblue<sup>®</sup></div>
            <div class="claim">A Windy.com Company</div>
          </div>
          <svg class="collapse" width="10" height="18" viewBox="0 0 10 18"><path d="M0 9L5 5V13Z" fill="#d8e0e8"></path><path d="M9 0V18" stroke="#d8e0e8" stroke-width="1.6"></path></svg>
        </div>
        ${this.renderNav()}
        <div class="more">Mostrar mais</div>
        <div class="scroll">
          <div class="arrow up"></div>
          <div class="thumb"></div>
          <div class="arrow down"></div>
        </div>
      </aside>

      <div class="main">
        <header class="head">
          <div class="head-in">
            <div class="top">
              <div class="search">
                <svg class="glyph" width="14" height="15" viewBox="0 0 14 15"><circle cx="5.8" cy="5.8" r="4.8" fill="none" stroke="#5f6468" stroke-width="1.5"></circle><path d="M9 9.5L13 14" stroke="#5f6468" stroke-width="2"></path></svg>
                <input placeholder="Pesquisa de localização" />
                <svg class="glyph" width="15" height="15" viewBox="0 0 15 15"><path d="M.7 2.5L5 1L10 2.5L14.3 1V12.5L10 14L5 12.5L.7 14ZM5 1V12.5M10 2.5V14" fill="#e4e6e8" stroke="#55595d" stroke-width="1.4"></path></svg>
              </div>
              <div class="tools">
                <svg class="glyph" width="22" height="23" viewBox="0 0 20 21"><circle cx="10" cy="5.5" r="5.5" fill="#e6e6e6"></circle><path d="M0 21V17C0 13 4 12 10 12C16 12 20 13 20 17V21Z" fill="#e6e6e6"></path></svg>
                <svg class="glyph" width="24" height="24" viewBox="0 0 24 24"><path fill="#e6e6e6" fill-rule="evenodd" d="M10 0H14L14.7 3.2C15.6 3.5 16.4 3.9 17.2 4.5L20.3 3.5L22.3 7L19.9 9.2C20.1 10.2 20.1 13.8 19.9 14.8L22.3 17L20.3 20.5L17.2 19.5C16.4 20.1 15.6 20.5 14.7 20.8L14 24H10L9.3 20.8C8.4 20.5 7.6 20.1 6.8 19.5L3.7 20.5L1.7 17L4.1 14.8C3.9 13.8 3.9 10.2 4.1 9.2L1.7 7L3.7 3.5L6.8 4.5C7.6 3.9 8.4 3.5 9.3 3.2ZM12 8A4 4 0 1 0 12 16A4 4 0 1 0 12 8Z"></path></svg>
              </div>
            </div>
            <div class="title-row">
              <div>
                <div class="title">
                  <h1>Tempo Campinas</h1>
                  <svg class="glyph" width="27" height="26" viewBox="0 0 27 26"><path d="M13.5 1.5L17 9.5L25.5 10.3L19 16L21 24.5L13.5 20L6 24.5L8 16L1.5 10.3L10 9.5Z" fill="none" stroke="#fff" stroke-width="1.6" stroke-linejoin="round"></path></svg>
                </div>
                <div class="sub">São Paulo, Brasil, 22.91°S 47.06°O, 686m s.n.m.</div>
              </div>
              <div class="now">
                <div class="now-line">
                  <svg class="glyph" width="48" height="48" viewBox="0 0 48 48">${moonPlain}</svg>
                  <span>24 °C</span>
                </div>
                <div class="now-time">20:00</div>
              </div>
            </div>
          </div>
        </header>

        <div class="content">
          <div class="col">
            <section class="week">
              ${days.map((d) => this.renderDay(d))}
              <div class="next">
                <svg width="8" height="12" viewBox="0 0 8 12"><path d="M1.5 1L6.5 6L1.5 11" fill="none" stroke=${NAVY} stroke-width="1.8"></path></svg>
              </div>
            </section>

            <div class="hour-head">
              <div class="hour-title">
                <span>domingo - 3h</span>
                <svg class="glyph" width="17" height="17" viewBox="0 0 17 17">
                  <circle cx="8.5" cy="8.5" r="7.7" fill="none" stroke="#63717e" stroke-width="1.1"></circle>
                  <text x="8.5" y="12.5" text-anchor="middle" font-size="11" font-family="Noto Sans" fill="#63717e">?</text>
                </svg>
              </div>
              <div class="switch"><span>3h</span><div class="toggle"><i></i></div><span>1h</span></div>
            </div>
            ${this.renderHourly()}
          </div>

          <div class="side">
            <div class="adfree">
              <div class="adfree-head">
                <svg class="glyph" width="20" height="19" viewBox="0 0 20 19"><path d="M3 13L1 4.5L6 8L10 2L14 8L19 4.5L17 13Z" fill="none" stroke=${NAVY} stroke-width="1.4" stroke-linejoin="round"></path><path d="M3 15.5H17M3 18H17" stroke=${NAVY} stroke-width="1.3"></path><circle cx="10" cy="1.5" r="1.2" fill=${NAVY}></circle></svg>
                <span>AD FREE</span>
              </div>
              <div>Remover anúncios por 9 € por ano.</div>
            </div>
            <div class="ad">
              <div class="ad-in">
                <div class="brand-ad">
                  <svg class="glyph" width="41" height="54" viewBox="0 0 41 54" style="margin-top:3px">
                    <g fill="#f26a1b">
                      <path d="M12.5 0L16 3.5L4 14L1 11Z" transform="translate(1 0)"></path>
                      <path d="M25 3L28.5 6.5L4 30L0 26Z"></path>
                      <path d="M27 14L31 18L11 38L7 34Z" transform="translate(-1 0)"></path>
                      <path d="M34 27L38 30.5L21 45L17 41Z" transform="translate(-3 0)"></path>
                      <path d="M27 45L31 48.5L27 52.5L23 49Z"></path>
                    </g>
                  </svg>
                  <div>
                    <div class="ad-date">10 - 13 MAR 2026</div>
                    <div class="ad-name">INTERTRAFFIC</div>
                    <div class="ad-city">AMSTERDAM</div>
                  </div>
                </div>
                <div class="ad-line1">meteoblue at Intertraffic</div>
                <div class="ad-rule"></div>
                <div class="ad-line2">Join us at booth 02.134</div>
              </div>
            </div>
          </div>
        </div>
      </div>
    `;
  }
}
